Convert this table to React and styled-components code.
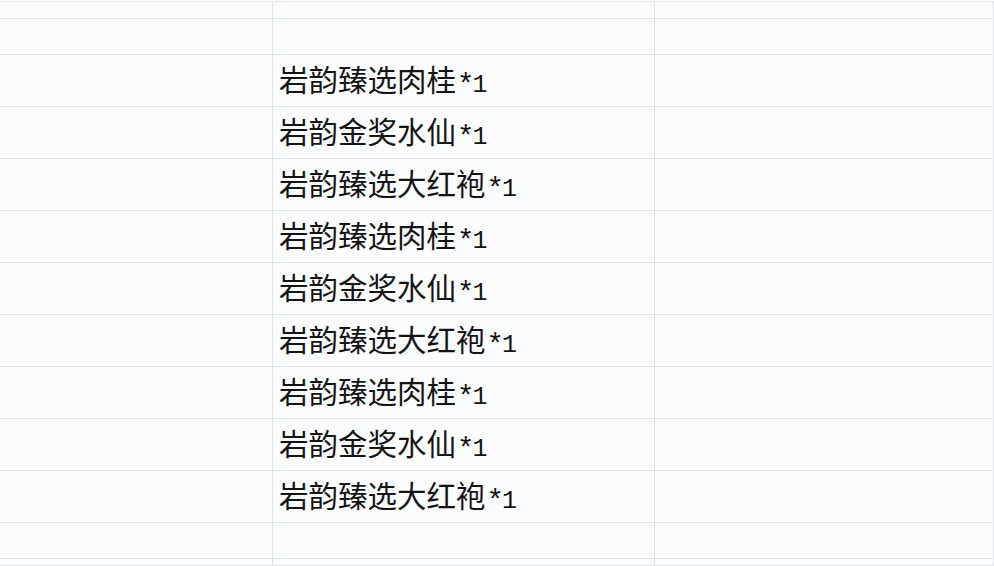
import React from "react";
import styled, { createGlobalStyle } from "styled-components";

const Global = createGlobalStyle`
  html, body { margin: 0; padding: 0; background: #fbfcfe; }
  body { font-family: "Noto Sans CJK SC", "Noto Sans", sans-serif; overflow: hidden; }
`;

const Sheet = styled.div`
  width: 994px;
  height: 566px;
  padding-top: 1px;
  box-sizing: border-box;
  display: grid;
  grid-template-columns: 273px 382px 339px;
  grid-template-rows: 18px 36px repeat(9, 52px) 36px 1fr;
  background: #fbfcfe;
  overflow: hidden;
`;

const Cell = styled.div`
  box-sizing: border-box;
  border-right: 1px solid #dfe2e7;
  border-bottom: 1px solid #dfe2e7;
  border-top: ${(p) => (p.$top ? "1px solid #e9ebef" : "none")};
  display: flex;
  align-items: center;
  padding: 0 0 0 6px;
  color: #141414;
  white-space: nowrap;
  overflow: hidden;
`;

const Label = styled.span`
  font-size: 29.5px;
  line-height: 1;
`;

const Qty = styled.span`
  font-family: "Liberation Mono", "DejaVu Sans Mono", monospace;
  font-size: 25px;
  margin-left: 1px;
  position: relative;
  top: 1px;
`;

const Star = styled.span`
  font-size: 29px;
  letter-spacing: -2px;
  position: relative;
  top: 2px;
`;

const items = [
  "岩韵臻选肉桂",
  "岩韵金奖水仙",
  "岩韵臻选大红袍",
  "岩韵臻选肉桂",
  "岩韵金奖水仙",
  "岩韵臻选大红袍",
  "岩韵臻选肉桂",
  "岩韵金奖水仙",
  "岩韵臻选大红袍",
];

export default function App() {
  const rows = [null, null, ...items, null, null];
  return (
    <>
      <Global />
      <Sheet>
        {rows.map((name, r) =>
          [0, 1, 2].map((c) => (
            <Cell key={`${r}-${c}`} $top={r === 0}>
              {c === 1 && name ? (
                <Label>
                  {name}
                  <Qty>
                    <Star>*</Star>1
                  </Qty>
                </Label>
              ) : null}
            </Cell>
          ))
        )}
      </Sheet>
    </>
  );
}
